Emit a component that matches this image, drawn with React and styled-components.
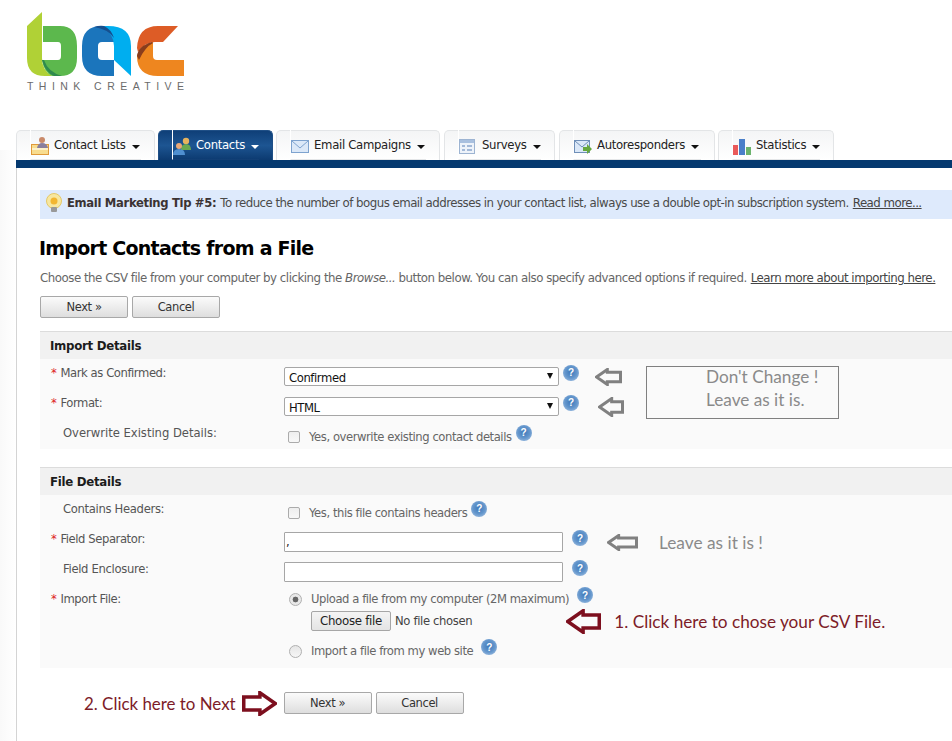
import React from 'react';
import styled, { createGlobalStyle } from 'styled-components';

const Global = createGlobalStyle`
  html, body { margin: 0; padding: 0; background: #fff; }
  body { font-family: "DejaVu Sans", sans-serif; font-size: 11.5px; color: #555; }
`;
const Page = styled.div`
  width: 952px; height: 741px; overflow: hidden; box-sizing: border-box; padding-left: 16px;
  background: linear-gradient(90deg, #f9f9f9 0, #ffffff 16px) 0 150px no-repeat, #fff;
`;
const Header = styled.header`height: 130px; margin-left: -16px; position: relative;`;
const LogoMark = styled.svg`display: block; position: absolute; left: 0; top: 0;`;
const LogoText = styled.div`
  position: absolute; left: 27px; top: 80px; font-family: "Liberation Sans", sans-serif;
  font-size: 10.5px; letter-spacing: 5.45px; color: #6b6b6b; white-space: nowrap;
`;
const TabRow = styled.nav`display: flex; height: 30px; align-items: stretch;`;
const Tab = styled.div`
  box-sizing: border-box; width: ${p => p.$w}px; margin-right: ${p => p.$gap}px; padding: 0 13px;
  border: 1px solid ${p => p.$active ? '#1f4f86' : '#e3e5e7'}; border-bottom: 0; border-radius: 5px 5px 0 0;
  background: ${p => p.$active ? 'linear-gradient(#0f3f78, #1d5592 50%, #0c3a70)' : 'linear-gradient(#f4f5f6, #ffffff)'};
  color: ${p => p.$active ? '#fff' : '#222'};
`;
const TabInner = styled.div`
  height: 30px; box-sizing: border-box; display: flex; align-items: center; margin-top: -1px;
  border-left: 1px solid #fff; border-bottom: 1px solid ${p => p.$active ? '#123f75' : '#e4e6e8'};
  font-size: 11.7px; letter-spacing: -.32px; white-space: nowrap; margin-bottom: -1px;
`;
const TabIcon = styled.svg`flex: none; margin: 2px 5px 0 0;`;
const Caret = styled.span`
  width: 0; height: 0; margin: 4px 0 0 6px; border: 4px solid transparent; border-bottom: 0;
  border-top: 4px solid ${p => p.$active ? '#fff' : '#111'}; border-left-width: 4.5px; border-right-width: 4.5px;
`;
const Bar = styled.div`height: 8px; background: #05396f; margin-right: -1px;`;
const Content = styled.main`
  border-left: 1px solid #d4d4d4; padding: 22px 0 0 23px; height: 573px; box-sizing: border-box;
`;
const Tip = styled.div`
  height: 29px; box-sizing: border-box; padding: 0 0 4px 5px; background: #deeafc; display: flex; align-items: center; color: #4a4a4a; white-space: nowrap;
  letter-spacing: -.53px; font-size: 11.8px;
  b { color: #3b3333; margin: 0 4px 0 4px; letter-spacing: -.33px; font-size: 11.6px; }
`;
const Link = styled.a`color: #444; text-decoration: underline; margin-left: ${p => p.$ml || 4}px;`;
const Title = styled.h1`
  margin: 18px 0 0 -1px; height: 23px; font-size: 19px; line-height: 23px; color: #000; font-weight: 700;
  letter-spacing: -.75px; white-space: nowrap;
`;
const Intro = styled.p`
  margin: 11px 0 0; height: 15px; line-height: 15px; color: #666; white-space: nowrap; font-size: 11.8px; letter-spacing: -.48px;
  i { font-style: italic; }
`;
const Buttons = styled.div`display: flex; gap: 4px; margin-top: ${p => p.$mt || 0}px;`;
const Button = styled.button`
  width: 88px; height: 22px; box-sizing: border-box; padding: 0; border: 1px solid #a8a8a8; border-radius: 2px;
  background: linear-gradient(#fbfbfb, #dedede); color: #333; font: 11.5px "DejaVu Sans", sans-serif; letter-spacing: -.4px;
`;
const Section = styled.section`margin-top: ${p => p.$mt}px; position: relative;`;
const SectionTitle = styled.h2`
  margin: 0; height: 28px; box-sizing: border-box; border-top: 1px solid #dcdcdc; background: #f1f1f1;
  font-size: 11.8px; line-height: 29px; font-weight: 700; color: #1c1c1c; padding-left: 10px; letter-spacing: -.3px;
`;
const SectionBody = styled.div`background: #fafafa; padding-top: 2px; height: ${p => p.$h}px; box-sizing: border-box;`;
const Row = styled.div`display: flex; height: ${p => p.$h || 30}px;`;
const Label = styled.label`
  width: 244px; flex: none; box-sizing: border-box; line-height: 24px; padding-left: ${p => p.$req ? 11 : 23}px;
  color: #555; letter-spacing: ${p => p.$ls ?? -.32}px; font-size: 11.6px; white-space: nowrap;
`;
const Req = styled.span`color: #d22; margin-right: 4px;`;
const Field = styled.div`display: flex; align-items: center; margin-top: ${p => p.$mt}px; height: ${p => p.$h || 20}px; white-space: nowrap;`;
const Choice = styled.span`color: #666; font-size: 11.6px; letter-spacing: -.44px; margin-left: ${p => p.$ml || 9}px;`;
const SelectWrap = styled.div`
  position: relative; width: 275px; height: 19px;
  &::after { content: ""; position: absolute; right: 6px; top: 6px; border: 4px solid transparent; border-bottom: 0; border-top: 6px solid #111; border-left-width: 3.5px; border-right-width: 3.5px; }
`;
const Select = styled.select`
  appearance: none; width: 100%; height: 100%; box-sizing: border-box; background: #fff; border: 1px solid #a6a6a6; border-radius: 2px;
  font: 11.6px "DejaVu Sans", sans-serif; letter-spacing: -.4px; color: #111; padding: 2px 4px 0; outline: none;
`;
const TextInput = styled.input`
  width: 279px; height: 20px; box-sizing: border-box; border: 1px solid #a6a6a6; background: #fff; padding: 0 1px;
  font: 11.6px "DejaVu Sans", sans-serif; color: #222; border-radius: 1px;
`;
const Check = styled.input`
  appearance: none; width: 12px; height: 12px; margin: 0 0 0 4px; box-sizing: border-box; border: 1px solid #ababab;
  border-radius: 2px; background: linear-gradient(#eee, #f8f8f8); flex: none;
`;
const Radio = styled.input`
  appearance: none; width: 13px; height: 13px; margin: 0 0 0 5px; box-sizing: border-box; border: 1px solid #b0b0b0; border-radius: 50%;
  flex: none; background: ${p => p.$on ? 'radial-gradient(circle, #666 0 2.6px, #e8e8e8 3.2px)' : 'linear-gradient(#e6e6e6, #f6f6f6)'};
`;
const Help = styled.span`
  width: 16px; height: 16px; flex: none; border-radius: 50%; display: inline-flex; align-items: center; justify-content: center;
  margin-left: ${p => p.$ml}px; margin-bottom: 8px;
  background: radial-gradient(circle at 50% 45%, #3d78b9 0, #6496cc 50%, #b4cde9 100%);
  color: #fff; font: 700 10px "Liberation Sans", sans-serif;
`;
const ArrowSvg = styled.svg`flex: none; margin-left: ${p => p.$ml || 0}px; margin-right: ${p => p.$mr || 0}px;`;
const Note = styled.span`
  font-family: Lato, sans-serif; font-size: ${p => p.$size || 16}px; color: ${p => p.$c}; margin-left: ${p => p.$ml || 0}px; white-space: nowrap;
`;
const NoteBox = styled.div`
  position: absolute; left: 606px; top: 35px; width: 193px; height: 53px; box-sizing: border-box; border: 1px solid #808080;
  font-family: Lato, sans-serif; font-size: 17.2px; line-height: 23px; color: #8a8a8a; padding: 0 0 0 59px; white-space: nowrap;
  background: #fafafa;
`;
const NoteText = styled.div`margin-top: -2px;`;
const FileBtn = styled.button`
  width: 80px; height: 20px; margin-left: 27px; flex: none; box-sizing: border-box; padding: 0; border: 1px solid #a6a6a6; border-radius: 2px; background: linear-gradient(#f4f4f4, #e4e4e4);
  font: 11.8px "DejaVu Sans", sans-serif; letter-spacing: -.3px; color: #222;
`;
const FileName = styled.span`color: #444; font-size: 11.6px; letter-spacing: -.35px; margin-left: 4px;`;
const Bottom = styled.div`display: flex; align-items: center; margin-top: 24px; margin-left: 44px; height: 22px;`;

const Arrow = ({ dir = 'left', color, w, h, sw = 3, ml, mr }) => {
  const head = h * 0.95; const cy = h / 2; const t = h * 0.26; const s = sw / 2;
  const pts = [[s, cy], [head * .72, s], [head * .72, cy - t], [w - s, cy - t], [w - s, cy + t], [head * .72, cy + t], [head * .72, h - s]];
  const p = pts.map(([x, y]) => `${dir === 'left' ? x : w - x},${y}`).join(' ');
  return <ArrowSvg $ml={ml} $mr={mr} width={w} height={h} viewBox={`0 0 ${w} ${h}`}><polygon points={p} fill="none" stroke={color} strokeWidth={sw} /></ArrowSvg>;
};

const Logo = () => (
  <LogoMark width="200" height="80" viewBox="0 0 200 80">
    <path d="M27 26 L42 12 V58 Q42 70 52 76 H45 Q27 76 27 58Z" fill="#b0d136" />
    <path d="M43 26 H60 Q77 26 77 46 V58 Q77 76 60 76 H52 Q44 72 42 60 H58 Q61 60 61 56 V46 Q61 42 58 42 H43Z" fill="#5cb84d" />
    <path d="M42 60 Q45 72 54 76 H62 Q48 72 44 60Z" fill="#2f8a4e" />
    <path d="M82 46 Q82 26 102 26 Q110 29 115 42 H102 Q98 42 98 46 V56 Q98 60 102 60 H114 V76 H102 Q82 76 82 56Z" fill="#1b75bc" />
    <path d="M102 26 H108 Q131 26 131 46 V76 L114 60 V46 Q114 34 102 26Z" fill="#00aeef" />
    <path d="M94 27 Q100 25 104 26 Q111 29 114 38 Q108 29 94 27Z" fill="#174f8e" />
    <path d="M138 54 Q145 44 153 42 V56 Q153 60 157 60 H184 V76 H158 Q137 76 137 56Z" fill="#ee861f" />
    <path d="M137 48 Q138 26 158 26 H178 L163 42 H155 Q145 42 138 52Z" fill="#dd5c26" />
    <path d="M137 56 Q138 46 152 42 L153 43 Q145 47 139 60Z" fill="#8a3d1c" />
  </LogoMark>
);

const icons = {
  lists: <><rect x=".5" y="7.5" width="17" height="10" fill="#f8dc8e" stroke="#e09a3a" /><circle cx="11" cy="3" r="3" fill="#c98a6a" /><path d="M6 11 Q7 6 11 6 Q16 6 17 11Z" fill="#8a7f9e" /><rect x="1" y="11" width="16" height="2" fill="#fdf1c8" /></>,
  contacts: <><circle cx="13" cy="4" r="3.2" fill="#e6b35e" /><path d="M8 13 Q8 7 13 7 Q18 7 18 13Z" fill="#6aa84f" /><circle cx="6" cy="9" r="3" fill="#e8a878" /><path d="M0 18 Q0 12 6 12 Q12 12 12 18Z" fill="#4f8fd0" /></>,
  email: <><rect x=".5" y="3.5" width="17" height="12" fill="#dbe8f8" stroke="#7ea3cf" /><path d="M1 4 L9 11 L17 4" fill="none" stroke="#7ea3cf" /></>,
  surveys: <><rect x=".5" y="2.5" width="15" height="14" fill="#eef3fa" stroke="#9db4d2" /><rect x="1" y="3" width="14" height="3" fill="#a9c0df" /><path d="M3 9 H6 M8 9 H13 M3 13 H6 M8 13 H13" stroke="#a3b9d8" strokeWidth="2" /></>,
  auto: <><rect x=".5" y="3.5" width="15" height="12" fill="#dbe8f8" stroke="#6f8fb8" /><path d="M1 4 L8 10 L15 4" fill="none" stroke="#6f8fb8" /><path d="M9 10 H13 V7 L18 12 L13 17 V14 H9Z" fill="#66a83e" /></>,
  stats: <><rect x="0" y="8" width="5" height="10" fill="#ea5a5a" /><rect x="6" y="2" width="6" height="16" fill="#4a7fc9" /><rect x="13" y="10" width="5" height="8" fill="#6cb36c" /></>,
};

const tabs = [
  ['Contact Lists', 'lists', 139, 3],
  ['Contacts', 'contacts', 115, 3, true],
  ['Email Campaigns', 'email', 164, 4],
  ['Surveys', 'surveys', 111, 4],
  ['Autoresponders', 'auto', 156, 3],
  ['Statistics', 'stats', 116, 0],
];

export default function App() {
  return (
    <Page>
      <Global />
      <Header>
        <Logo />
        <LogoText>THINK CREATIVE</LogoText>
      </Header>
      <TabRow>
        {tabs.map(([t, ic, w, gap, active]) => (
          <Tab key={t} $w={w} $gap={gap} $active={active}>
            <TabInner $active={active}>
              <TabIcon width="18" height="18" viewBox="0 0 18 18">{icons[ic]}</TabIcon>
              <span>{t}</span>
              <Caret $active={active} />
            </TabInner>
          </Tab>
        ))}
      </TabRow>
      <Bar />
      <Content>
        <Tip>
          <svg width="18" height="20" viewBox="0 0 18 20"><circle cx="9" cy="8" r="7.5" fill="#f7e7a0" stroke="#e5c868" /><circle cx="9" cy="8" r="3.5" fill="#f2b632" /><rect x="6" y="14" width="6" height="5" rx="1" fill="#999" /></svg>
          <b>Email Marketing Tip #5:</b>
          To reduce the number of bogus email addresses in your contact list, always use a double opt-in subscription system.
          <Link>Read more...</Link>
        </Tip>
        <Title>Import Contacts from a File</Title>
        <Intro>
          Choose the CSV file from your computer by clicking the <i>Browse...</i> button below. You can also specify advanced options if required.
          <Link>Learn more about importing here.</Link>
        </Intro>
        <Buttons $mt={10}><Button>Next »</Button><Button>Cancel</Button></Buttons>
        <Section $mt={13}>
          <SectionTitle>Import Details</SectionTitle>
          <SectionBody $h={90}>
            <Row>
              <Label $req $ls={-.42}><Req>*</Req>Mark as Confirmed:</Label>
              <Field $mt={6} $h={19}>
                <SelectWrap><Select defaultValue="c"><option value="c">Confirmed</option></Select></SelectWrap>
                <Help $ml={4}>?</Help>
                <Arrow color="#808080" w={27} h={18} ml={16} />
              </Field>
            </Row>
            <Row>
              <Label $req $ls={-.42}><Req>*</Req>Format:</Label>
              <Field $mt={6} $h={19}>
                <SelectWrap><Select defaultValue="h"><option value="h">HTML</option></Select></SelectWrap>
                <Help $ml={4}>?</Help>
                <Arrow color="#808080" w={26} h={20} ml={19} />
              </Field>
            </Row>
            <Row>
              <Label $ls={-.02}>Overwrite Existing Details:</Label>
              <Field $mt={6} $h={19}>
                <Check type="checkbox" />
                <Choice>Yes, overwrite existing contact details</Choice>
                <Help $ml={4}>?</Help>
              </Field>
            </Row>
          </SectionBody>
          <NoteBox><NoteText>Don't Change !<br />Leave as it is.</NoteText></NoteBox>
        </Section>
        <Section $mt={18}>
          <SectionTitle>File Details</SectionTitle>
          <SectionBody $h={173}>
            <Row>
              <Label>Contains Headers:</Label>
              <Field $mt={6} $h={19}>
                <Check type="checkbox" />
                <Choice>Yes, this file contains headers</Choice>
                <Help $ml={4}>?</Help>
              </Field>
            </Row>
            <Row>
              <Label $req $ls={-.42}><Req>*</Req>Field Separator:</Label>
              <Field $mt={5}>
                <TextInput defaultValue="," />
                <Help $ml={9}>?</Help>
                <Arrow color="#808080" w={31} h={17} ml={19} />
                <Note $c="#8a8a8a" $ml={21} $size={17.3}>Leave as it is !</Note>
              </Field>
            </Row>
            <Row>
              <Label>Field Enclosure:</Label>
              <Field $mt={5}>
                <TextInput />
                <Help $ml={9}>?</Help>
              </Field>
            </Row>
            <Row $h={24}>
              <Label $req $ls={-.42}><Req>*</Req>Import File:</Label>
              <Field $mt={2}>
                <Radio type="radio" $on />
                <Choice>Upload a file from my computer (2M maximum)</Choice>
                <Help $ml={8}>?</Help>
              </Field>
            </Row>
            <Row $h={30}>
              <Label />
              <Field $mt={0}>
                <FileBtn>Choose file</FileBtn>
                <FileName>No file chosen</FileName>
                <Arrow color="#7d0f1e" w={35} h={25} sw={3.5} ml={94} />
                <Note $c="#7d1c28" $ml={13} $size={17.2}>1. Click here to chose your CSV File.</Note>
              </Field>
            </Row>
            <Row $h={30}>
              <Label />
              <Field $mt={0}>
                <Radio type="radio" />
                <Choice>Import a file from my web site</Choice>
                <Help $ml={8}>?</Help>
              </Field>
            </Row>
          </SectionBody>
        </Section>
        <Bottom>
          <Note $c="#7d1c28" $size={16.9}>2. Click here to Next</Note>
          <Arrow dir="right" color="#7d0f1e" w={35} h={25} sw={3.5} ml={6} mr={7} />
          <Buttons><Button>Next »</Button><Button>Cancel</Button></Buttons>
        </Bottom>
      </Content>
    </Page>
  );
}
